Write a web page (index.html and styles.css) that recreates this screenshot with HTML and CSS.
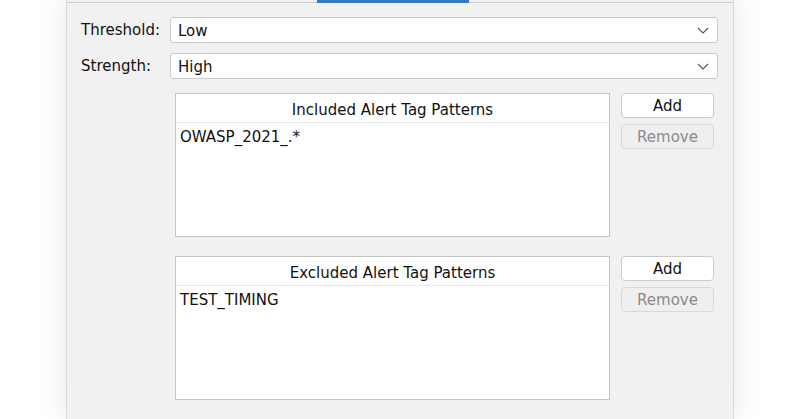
FILE: index.html
```html
<!DOCTYPE html>
<html>
<head>
<meta charset="utf-8">
<link rel="stylesheet" href="styles.css">
</head>
<body>
<div class="panel">
  <div class="tabstrip"><div class="tab-active"></div></div>
  <div class="content">
    <div class="form">
      <label class="lbl">Threshold:</label>
      <div class="combo"><span>Low</span><svg class="chev" width="12" height="7" viewBox="0 0 12 7"><path d="M1 1 L6 6 L11 1" fill="none" stroke="#555" stroke-width="1.1"/></svg></div>
      <label class="lbl">Strength:</label>
      <div class="combo"><span>High</span><svg class="chev" width="12" height="7" viewBox="0 0 12 7"><path d="M1 1 L6 6 L11 1" fill="none" stroke="#555" stroke-width="1.1"/></svg></div>
    </div>
    <div class="lists">
      <div class="listbox first">
        <div class="list-head">Included Alert Tag Patterns</div>
        <div class="list-item">OWASP_2021_.*</div>
      </div>
      <div class="btns first">
        <button class="btn">Add</button>
        <button class="btn disabled">Remove</button>
      </div>
      <div class="listbox">
        <div class="list-head">Excluded Alert Tag Patterns</div>
        <div class="list-item">TEST_TIMING</div>
      </div>
      <div class="btns">
        <button class="btn">Add</button>
        <button class="btn disabled">Remove</button>
      </div>
    </div>
  </div>
</div>
</body>
</html>
```
FILE: styles.css
```css
html, body {
  margin: 0;
  padding: 0;
  background: #ffffff;
  height: 419px;
  overflow: hidden;
}
body {
  font-family: "DejaVu Sans", "Noto Sans", sans-serif;
  font-size: 15px;
  color: #111;
}
.panel {
  margin: 0 66px;
  height: 419px;
  background: #f1f1f1;
  border-left: 1px solid #dadada;
  border-right: 1px solid #dadada;
  box-shadow: 0 0 28px rgba(0,0,0,0.10);
}
.tabstrip {
  height: 2px;
  border-bottom: 1px solid #cfcfcf;
}
.tab-active {
  margin-left: 250px;
  width: 152px;
  height: 3px;
  background: #2f7bd0;
}
.content {
  padding: 14px 15px 0 14px;
}
.form {
  display: grid;
  grid-template-columns: 89px 1fr;
  row-gap: 10px;
  align-items: center;
}
.lbl {
  line-height: 26px;
  margin-top: -1px;
}
.combo {
  height: 24px;
  background: #fff;
  border: 1px solid #c9c9c9;
  border-radius: 3px;
  display: flex;
  align-items: center;
  justify-content: space-between;
  padding: 0 8px 0 7px;
}
.combo span { margin-top: 2px; }
.chev { margin-top: 1px; }
.lists {
  display: grid;
  grid-template-columns: 435px 93px;
  column-gap: 11px;
  margin-top: 14px;
  margin-left: 94px;
  row-gap: 19px;
}
.listbox {
  height: 142px;
  background: #fff;
  border: 1px solid #c4c4c4;
}
.list-head {
  height: 26px;
  padding-top: 2px;
  line-height: 29px;
  text-align: center;
  border-bottom: 1px solid #e6e6e6;
}
.list-item {
  padding: 4px 4px;
  line-height: 20px;
}
.btns {
  display: flex;
  flex-direction: column;
  gap: 6px;
}
.btn {
  height: 25px;
  font: inherit;
  color: #111;
  background: #fff;
  border: 1px solid #cbcbcb;
  border-radius: 4px;
  padding: 1px 0 0;
}
.btn.disabled {
  background: #efefef;
  color: #8a8a8a;
  border-color: #d8d8d8;
}
```
